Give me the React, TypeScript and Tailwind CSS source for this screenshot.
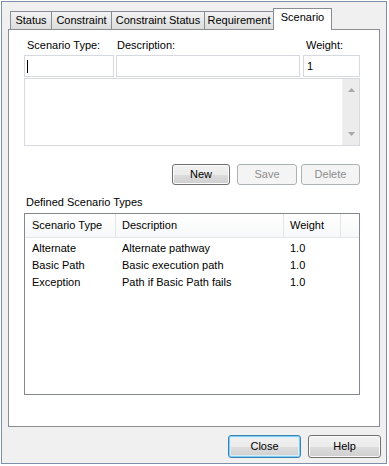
import React from "react";

const font = "font-['Liberation_Sans',Arial,sans-serif]";

function Btn({ label, w, disabled, def }: { label: string; w: string; disabled?: boolean; def?: boolean }) {
  let cls =
    "flex items-center justify-center rounded-[3px] border text-[11px] leading-none h-full " + w + " ";
  if (disabled) {
    cls += "border-[#adb2b5] bg-[#f4f4f4] text-[#8d8d8d]";
  } else if (def) {
    cls +=
      "border-[#3c7fb1] text-black bg-[linear-gradient(to_bottom,#f2f2f2_0%,#ebebeb_50%,#dddddd_50%,#cfcfcf_100%)] shadow-[inset_0_0_0_1px_#7fd0f5,inset_0_0_0_2px_#d8eef9]";
  } else {
    cls +=
      "border-[#707070] text-black bg-[linear-gradient(to_bottom,#f2f2f2_0%,#ebebeb_50%,#dddddd_50%,#cfcfcf_100%)] shadow-[inset_0_0_0_1px_#fbfbfb]";
  }
  return <div className={cls}>{label}</div>;
}

function Tab({ label, w, first, selected }: { label: string; w: string; first?: boolean; selected?: boolean }) {
  if (selected) {
    return (
      <div
        className={
          "relative z-10 -ml-px mb-[-1px] flex h-[22px] items-start justify-center border border-b-0 border-[#898c95] bg-white pt-[2px] text-[11px] leading-[13px] text-black " +
          w
        }
      >
        {label}
      </div>
    );
  }
  return (
    <div
      className={
        "flex h-[18px] items-center justify-center border border-b-0 border-[#898c95] bg-linear-to-b from-[#f3f3f3] to-[#dcdcdc] text-[11px] leading-none text-black " +
        (first ? "" : "-ml-px ") +
        w
      }
    >
      {label}
    </div>
  );
}

export default function App() {
  const rows = [
    ["Alternate", "Alternate pathway", "1.0"],
    ["Basic Path", "Basic execution path", "1.0"],
    ["Exception", "Path if Basic Path fails", "1.0"],
  ];
  return (
    <div className={"h-[466px] w-[389px] bg-white pl-px pt-px " + font}>
      <div className="flex h-[463px] w-[386px] flex-col border border-[#7d8fa9] bg-[#f0f0f0]">
        {/* tabs */}
        <div className="ml-[8px] mt-[7px] flex h-[20px] items-end">
          <Tab label="Status" w="w-[42px]" first />
          <Tab label="Constraint" w="w-[61px]" />
          <Tab label="Constraint Status" w="w-[94px]" />
          <Tab label="Requirement" w="w-[70px]" />
          <Tab label="Scenario" w="w-[59px]" selected />
        </div>
        {/* panel */}
        <div className="ml-[6px] flex h-[398px] w-[372px] flex-col border border-[#898c95] bg-white pl-[15px] text-[11px] text-black">
          {/* labels */}
          <div className="mt-[9px] flex h-[13px] leading-[13px]">
            <div className="ml-[3px] w-[87px]">Scenario Type:</div>
            <div className="ml-[3px] w-[188px]">Description:</div>
            <div className="ml-[1px]">Weight:</div>
          </div>
          {/* inputs */}
          <div className="mt-[3px] flex h-[22px]">
            <div className="relative h-full w-[90px] border border-[#d6d9df] bg-white">
              <div className="absolute left-[2px] top-[4px] h-[13px] w-px bg-black" />
            </div>
            <div className="ml-[2px] h-full w-[184px] border border-[#d6d9df] bg-white" />
            <div className="ml-[3px] flex h-full w-[57px] items-center border border-[#d6d9df] bg-white pl-[3px] leading-none">
              1
            </div>
          </div>
          {/* textarea */}
          <div className="mt-[1px] flex h-[68px] w-[336px] border border-[#d6d9df] bg-white">
            <div className="flex-1" />
            <div className="flex w-[17px] flex-col items-center justify-between border-l border-[#f0f0f0] bg-[#ececec] py-[9px]">
              <svg width="7" height="4" viewBox="0 0 7 4">
                <path d="M0 4 L3.5 0 L7 4 Z" fill="#a8a8a8" />
              </svg>
              <svg width="7" height="4" viewBox="0 0 7 4">
                <path d="M0 0 L3.5 4 L7 0 Z" fill="#a8a8a8" />
              </svg>
            </div>
          </div>
          {/* buttons */}
          <div className="mt-[18px] flex h-[21px]">
            <div className="ml-[148px]">
              <Btn label="New" w="w-[58px]" />
            </div>
            <div className="ml-[7px]">
              <Btn label="Save" w="w-[60px]" disabled />
            </div>
            <div className="ml-[4px]">
              <Btn label="Delete" w="w-[59px]" disabled />
            </div>
          </div>
          {/* list label */}
          <div className="ml-[2px] mt-[11px] h-[13px] leading-[13px]">Defined Scenario Types</div>
          {/* list */}
          <div className="mt-[4px] flex h-[182px] w-[336px] flex-col border border-[#828790] bg-white">
            <div className="flex h-[24px] border-b border-[#e5e5e5] bg-linear-to-b from-white to-[#f7f8f9] leading-none">
              <div className="flex w-[91px] items-center border-r border-[#e5e5e5] pl-[7px]">Scenario Type</div>
              <div className="flex w-[168px] items-center border-r border-[#e5e5e5] pl-[6px]">Description</div>
              <div className="flex w-[57px] items-center border-r border-[#e5e5e5] pl-[6px]">Weight</div>
              <div className="flex-1" />
            </div>
            <div className="mt-[2px] flex flex-col">
              {rows.map((r) => (
                <div key={r[0]} className="flex h-[17px] items-center leading-none">
                  <div className="w-[91px] pl-[7px]">{r[0]}</div>
                  <div className="w-[168px] pl-[6px]">{r[1]}</div>
                  <div className="w-[57px] pl-[6px]">{r[2]}</div>
                </div>
              ))}
            </div>
          </div>
        </div>
        {/* bottom buttons */}
        <div className="mt-[8px] flex h-[23px]">
          <div className="ml-[226px]">
            <Btn label="Close" w="w-[73px]" def />
          </div>
          <div className="ml-[7px]">
            <Btn label="Help" w="w-[73px]" />
          </div>
        </div>
      </div>
    </div>
  );
}
